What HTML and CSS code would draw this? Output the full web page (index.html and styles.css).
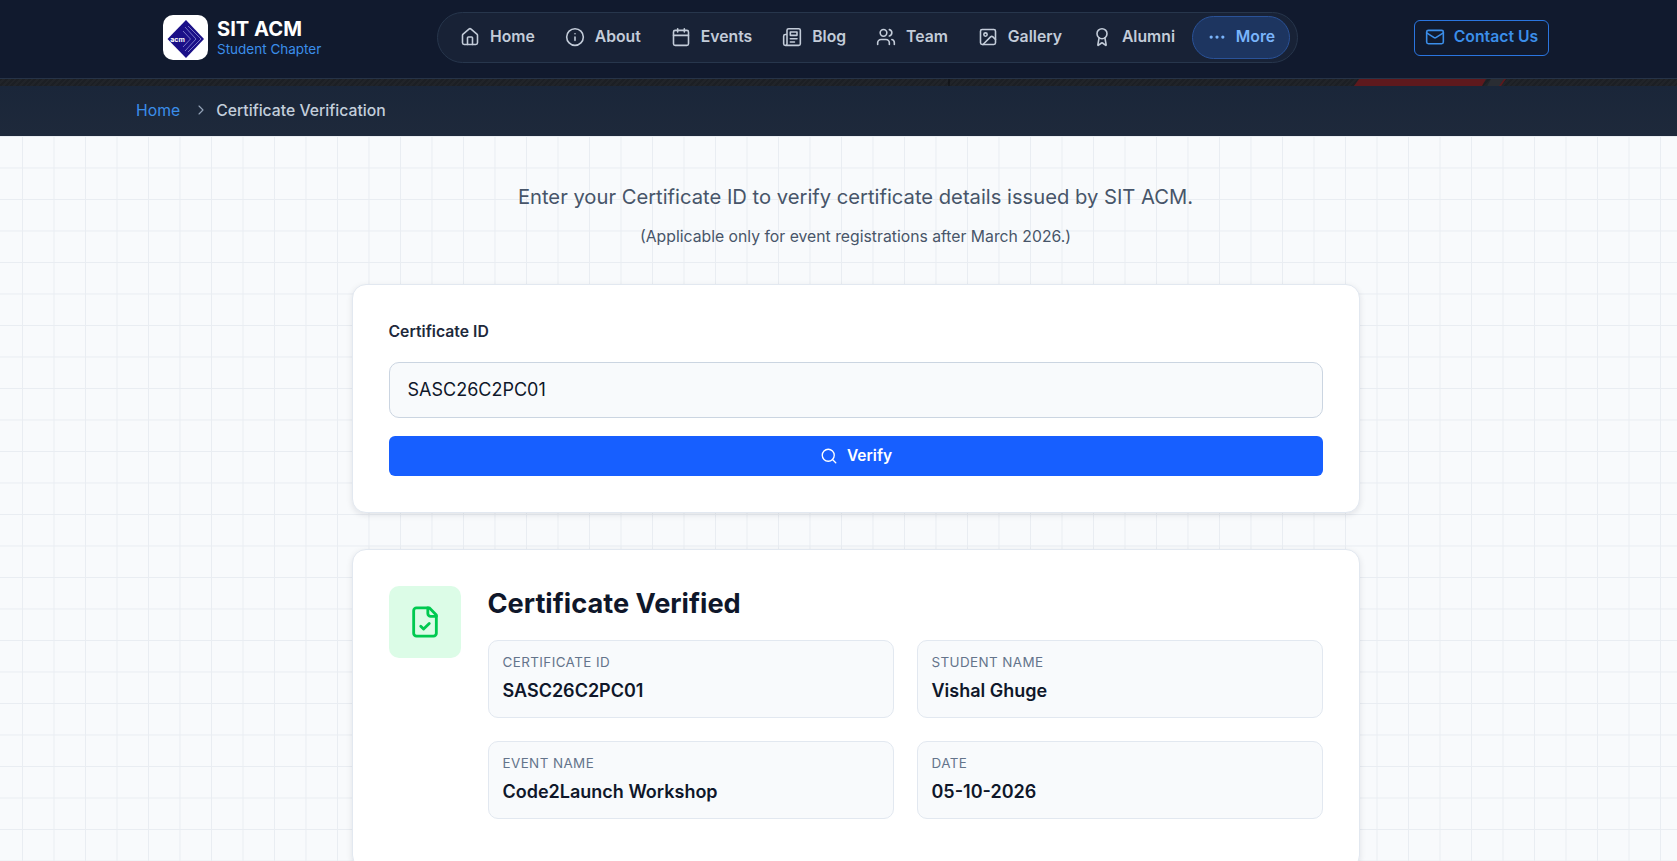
FILE: index.html
```html
<!DOCTYPE html>
<html lang="en">
<head>
<meta charset="utf-8">
<title>Certificate Verification</title>
<link rel="stylesheet" href="styles.css">
</head>
<body>
<header class="topbar">
  <a class="brand" href="#">
    <span class="logo">
      <svg viewBox="0 0 45 45" width="45" height="45">
        <path d="M23 5 41 24 23 43 4.5 24Z" fill="#1b1088"/>
        <path d="M25 11 38 24 25 37M22 12 33 24 22 36M20 16 27.500 24 20 32" fill="none" stroke="#a0a0e0" stroke-width=".7"/>
        <text x="14.500" y="26.500" class="logo-text">acm</text>
      </svg>
    </span>
    <span class="brand-text">
      <span class="brand-name">SIT ACM</span>
      <span class="brand-sub">Student Chapter</span>
    </span>
  </a>
  <nav class="nav">
    <a class="nav-item" href="#"><svg class="ico" viewBox="0 0 24 24"><path d="M15 21v-8a1 1 0 0 0-1-1h-4a1 1 0 0 0-1 1v8"/><path d="M3 10a2 2 0 0 1 .709-1.528l7-5.999a2 2 0 0 1 2.582 0l7 5.999A2 2 0 0 1 21 10v9a2 2 0 0 1-2 2H5a2 2 0 0 1-2-2z"/></svg>Home</a>
    <a class="nav-item" href="#"><svg class="ico" viewBox="0 0 24 24"><circle cx="12" cy="12" r="10"/><path d="M12 16v-4"/><path d="M12 8h.01"/></svg>About</a>
    <a class="nav-item" href="#"><svg class="ico" viewBox="0 0 24 24"><path d="M8 2v4"/><path d="M16 2v4"/><rect x="3" y="4" width="18" height="18" rx="2"/><path d="M3 10h18"/></svg>Events</a>
    <a class="nav-item" href="#"><svg class="ico" viewBox="0 0 24 24"><path d="M4 22h16a2 2 0 0 0 2-2V4a2 2 0 0 0-2-2H8a2 2 0 0 0-2 2v16a2 2 0 0 1-2 2Zm0 0a2 2 0 0 1-2-2v-9c0-1.1.9-2 2-2h2"/><path d="M18 14h-8"/><path d="M15 18h-5"/><path d="M10 6h8v4h-8V6Z"/></svg>Blog</a>
    <a class="nav-item" href="#"><svg class="ico" viewBox="0 0 24 24"><path d="M16 21v-2a4 4 0 0 0-4-4H6a4 4 0 0 0-4 4v2"/><circle cx="9" cy="7" r="4"/><path d="M22 21v-2a4 4 0 0 0-3-3.87"/><path d="M16 3.13a4 4 0 0 1 0 7.75"/></svg>Team</a>
    <a class="nav-item" href="#"><svg class="ico" viewBox="0 0 24 24"><rect x="3" y="3" width="18" height="18" rx="2"/><circle cx="9" cy="9" r="2"/><path d="m21 15-3.086-3.086a2 2 0 0 0-2.828 0L6 21"/></svg>Gallery</a>
    <a class="nav-item" href="#"><svg class="ico" viewBox="0 0 24 24"><path d="m15.477 12.89 1.515 8.526a.5.5 0 0 1-.81.47l-3.58-2.687a1 1 0 0 0-1.197 0l-3.586 2.686a.5.5 0 0 1-.81-.469l1.514-8.526"/><circle cx="12" cy="8" r="6"/></svg>Alumni</a>
    <a class="nav-item nav-more" href="#"><svg class="ico" viewBox="0 0 24 24"><circle cx="12" cy="12" r="1"/><circle cx="19" cy="12" r="1"/><circle cx="5" cy="12" r="1"/></svg>More</a>
  </nav>
  <a class="contact" href="#"><svg class="ico" viewBox="0 0 24 24"><path d="m22 7-8.991 5.727a2 2 0 0 1-2.009 0L2 7"/><rect x="2" y="4" width="20" height="16" rx="2"/></svg>Contact Us</a>
</header>
<div class="strip">
  <svg class="strip-art" viewBox="0 0 1677 7" width="1677" height="7" preserveAspectRatio="none">
    <rect x="948.5" width="1" height="7" fill="#0b0d10"/>
    <path d="M1359 0H1486L1482 7H1354Z" fill="#5e191d"/>
    <path d="M1491 0H1505L1501 7H1487Z" fill="#2a2d33"/>
    <path d="M1504 0H1506L1501 7H1499Z" fill="#5e191d"/>
  </svg>
</div>
<div class="crumbs">
  <a class="crumb-link" href="#">Home</a>
  <svg class="crumb-sep" viewBox="0 0 24 24"><path d="m9 18 6-6-6-6"/></svg>
  <span class="crumb-current">Certificate Verification</span>
</div>
<main class="page">
  <p class="lead">Enter your Certificate ID to verify certificate details issued by SIT ACM.</p>
  <p class="note">(Applicable only for event registrations after March 2026.)</p>
  <form class="card form-card">
    <label class="field-label" for="cert">Certificate ID</label>
    <input class="field" id="cert" type="text" value="SASC26C2PC01">
    <button class="verify" type="button"><svg class="ico" viewBox="0 0 24 24"><path d="m21 21-4.34-4.34"/><circle cx="11" cy="11" r="8"/></svg>Verify</button>
  </form>
  <section class="card result-card">
    <div class="result-icon"><svg viewBox="0 0 24 24"><path d="M15 2H6a2 2 0 0 0-2 2v16a2 2 0 0 0 2 2h12a2 2 0 0 0 2-2V7Z"/><path d="M14 2v4a2 2 0 0 0 2 2h4"/><path d="m9 15 2 2 4-4"/></svg></div>
    <div class="result-body">
      <h2 class="result-title">Certificate Verified</h2>
      <div class="details">
        <div class="detail"><span class="detail-label">Certificate ID</span><span class="detail-value">SASC26C2PC01</span></div>
        <div class="detail"><span class="detail-label">Student Name</span><span class="detail-value">Vishal Ghuge</span></div>
        <div class="detail"><span class="detail-label">Event Name</span><span class="detail-value">Code2Launch Workshop</span></div>
        <div class="detail"><span class="detail-label">Date</span><span class="detail-value">05-10-2026</span></div>
      </div>
    </div>
  </section>
</main>
</body>
</html>
```
FILE: styles.css
```css
* { box-sizing: border-box; }
html, body { margin: 0; height: 861px; overflow: hidden; }
body {
  font-family: Inter, "Liberation Sans", sans-serif;
  background-color: #f8fafc;
  color: #0f172a;
}
a { text-decoration: none; color: inherit; }
.ico {
  width: 20px; height: 20px; flex: none;
  fill: none; stroke: currentColor; stroke-width: 1.9;
  stroke-linecap: round; stroke-linejoin: round;
}

.topbar {
  height: 79px;
  padding: 0 128px 3px 163px;
  display: flex; align-items: center;
  background: #111a2e;
  border-bottom: 1px solid #263347;
}
.brand { display: flex; align-items: center; gap: 9px; width: 274px; flex: none; }
.logo { width: 45px; height: 45px; background: #fff; border-radius: 10px; flex: none; display: block; }
.logo svg { display: block; }
.logo-text { font: 700 7px Inter, sans-serif; fill: #fff; text-anchor: middle; }
.brand-text { display: flex; flex-direction: column; }
.brand-name { font-size: 20.16px; font-weight: 700; line-height: 24px; color: #fff; }
.brand-sub { font-size: 13.5px; line-height: 17px; color: #3b8eea; }

.nav {
  width: 861px; height: 51px; flex: none;
  padding: 0 7px 0 22px;
  display: flex; align-items: center; justify-content: space-between;
  background: #182236;
  border: 1px solid #27364c;
  border-radius: 26px;
}
.nav-item {
  display: flex; align-items: center; gap: 10px;
  padding-bottom: 2px;
  font-size: 15.75px; font-weight: 600; color: #c3ccd9;
}
.nav-more {
  width: 98px; height: 43px; margin-left: -13px;
  justify-content: center; gap: 9px;
  color: #7ab4fb;
  background: #1d3560;
  border: 1px solid #2a5298;
  border-radius: 22px;
}
.contact {
  margin-left: auto;
  width: 135px; height: 36px;
  padding-bottom: 2px;
  display: flex; align-items: center; justify-content: center; gap: 9px;
  font-size: 15.75px; font-weight: 600; color: #3b8eea;
  border: 1px solid #2a75e0;
  border-radius: 6px;
}

.strip {
  height: 7px;
  background: repeating-linear-gradient(135deg, #1c1f24 0 2px, #212429 2px 4px);
}
.strip-art { display: block; }

.crumbs {
  height: 50px;
  padding: 0 0 2px 136px;
  display: flex; align-items: center;
  font-size: 15.75px; font-weight: 500;
  background: linear-gradient(#1a2639, #1e293b);
}
.crumb-link { color: #3b8eea; font-weight: 400; }
.crumb-sep {
  width: 16px; height: 16px; margin: 0 7px 0 13px;
  fill: none; stroke: #94a3b8; stroke-width: 1.7; stroke-linecap: round; stroke-linejoin: round;
}
.crumb-current { color: #c3cedb; }

.page {
  height: 726px;
  padding: 49px 0 0 34px;
  background-color: #f8fafc;
  background-image:
    linear-gradient(to right, #e9edf2 1.2px, transparent 1.2px),
    linear-gradient(to bottom, #e9edf2 1.2px, transparent 1.2px);
  background-size: 31.5px 31.5px;
  background-position: 22px 0;
}
.lead { margin: 0; text-align: center; font-size: 20.2px; line-height: 24px; color: #475569; }
.note { margin: 18px 0 0; text-align: center; font-size: 15.75px; line-height: 20px; color: #475569; }

.card {
  width: 1008px; margin: 0 auto;
  background: #fff;
  border: 1px solid #e2e8f0;
  border-radius: 14px;
  box-shadow: 0 2px 6px rgba(15, 23, 42, .1);
}
.form-card {
  height: 229px; margin-top: 37px;
  padding: 36px;
  display: flex; flex-direction: column;
}
.field-label { font-size: 15.75px; font-weight: 600; line-height: 20px; padding-top: 1px; color: #1e293b; }
.field {
  height: 57px; margin-top: 20px;
  padding: 0 18px 2px;
  font: 400 18px Inter, sans-serif; color: #0f172a;
  background: #f8fafc;
  border: 1px solid #cbd5e1;
  border-radius: 10px;
}
.verify {
  height: 40px; margin-top: 18px;
  padding-bottom: 2px;
  display: flex; align-items: center; justify-content: center; gap: 9px;
  font: 600 15.5px Inter, sans-serif; color: #fff;
  background: #175fff;
  border: 0; border-radius: 6px;
}
.verify .ico { width: 18px; height: 18px; stroke-width: 1.8; margin-left: 1px; }
.result-card {
  height: 320px; margin-top: 36px;
  padding: 36px;
  display: flex; gap: 27px; align-items: flex-start;
}
.result-icon {
  width: 72px; height: 72px; flex: none;
  display: flex; align-items: center; justify-content: center;
  background: #dcfce7; border-radius: 10px;
}
.result-icon svg {
  width: 34px; height: 34px;
  fill: none; stroke: #00c950; stroke-width: 2; stroke-linecap: round; stroke-linejoin: round;
}
.result-body { flex: 1; min-width: 0; }
.result-title { margin: 0; font-size: 27.2px; font-weight: 700; line-height: 36px; color: #0f172a; }
.details {
  margin-top: 18px;
  display: grid; grid-template-columns: 1fr 1fr; gap: 23px;
}
.detail {
  height: 78px; padding: 12px 14px;
  display: flex; flex-direction: column; gap: 8px;
  background: #f8fafc;
  border: 1px solid #e2e8f0;
  border-radius: 10px;
}
.detail-label { font-size: 13.44px; letter-spacing: .4px; line-height: 18px; color: #64748b; text-transform: uppercase; }
.detail-value { font-size: 18px; font-weight: 600; line-height: 24px; color: #0f172a; }
```
